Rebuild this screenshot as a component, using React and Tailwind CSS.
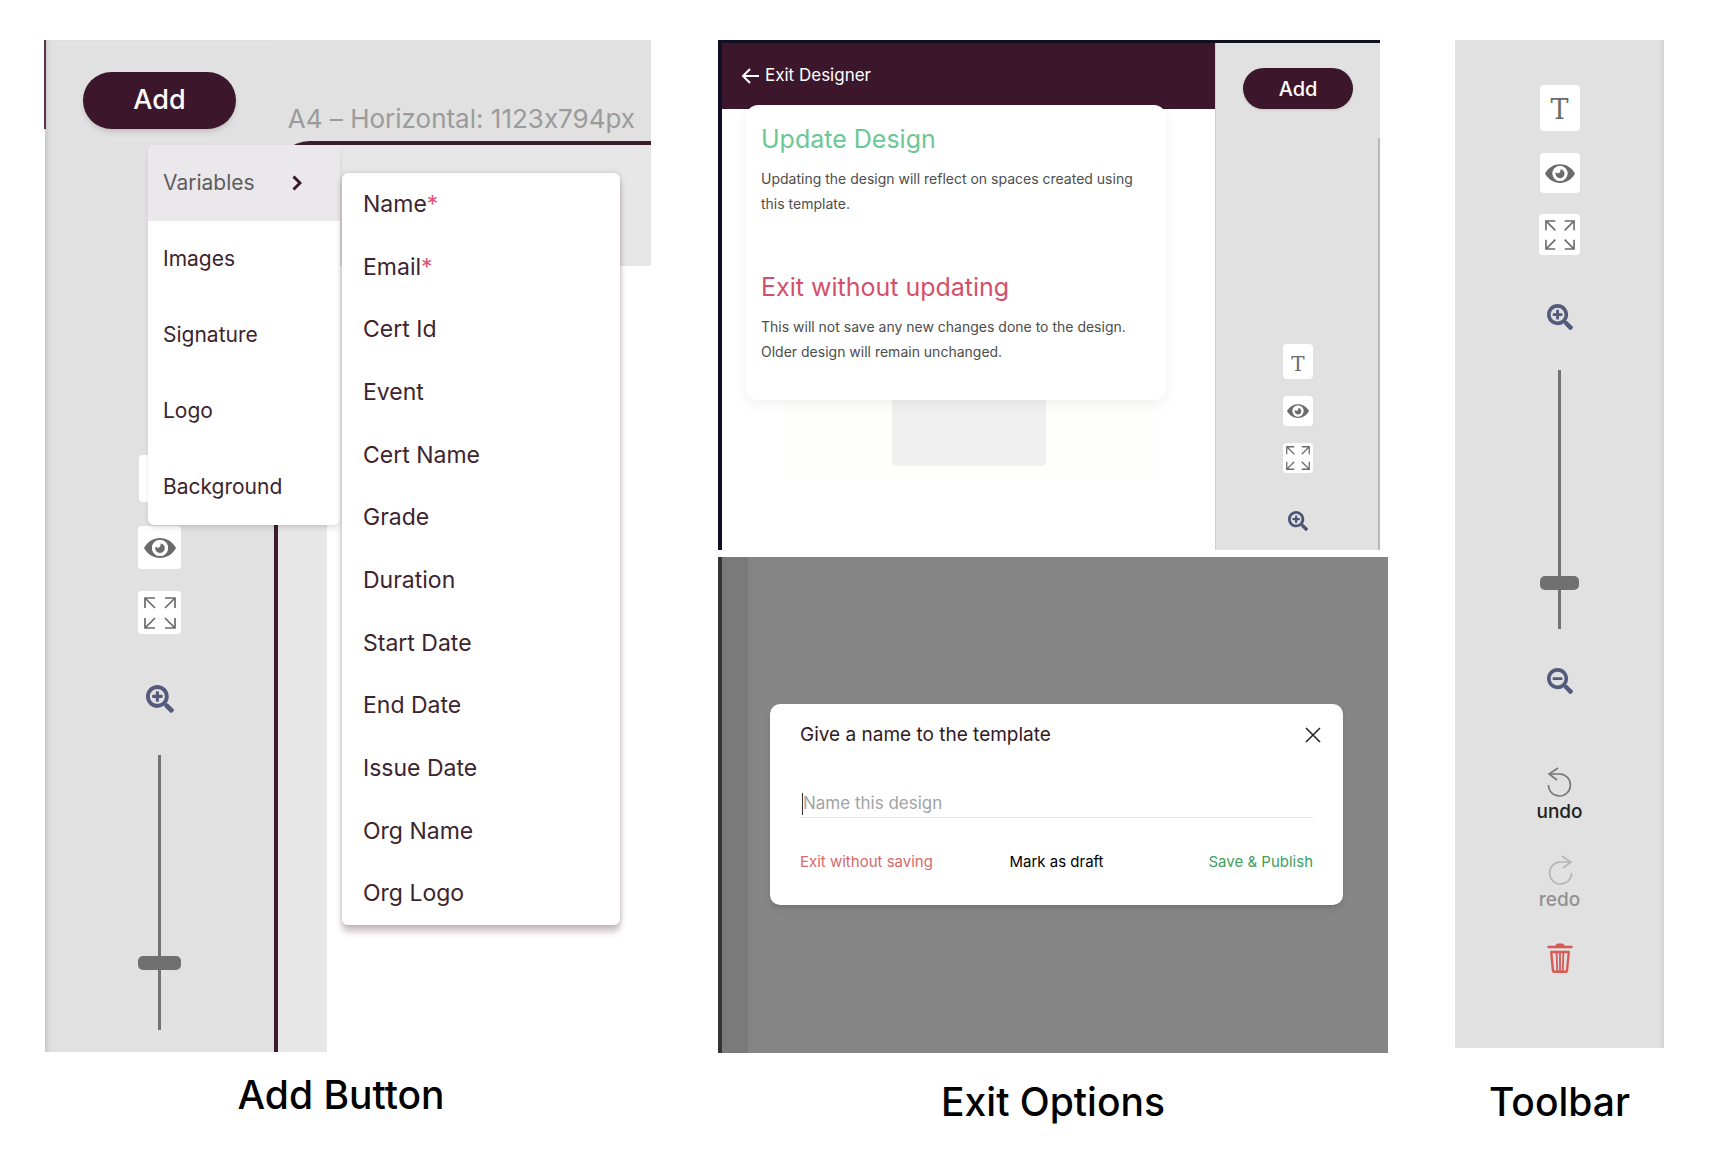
import React from 'react';
import { FaSearchMinus, FaSearchPlus } from 'react-icons/fa';

const MENU_ITEMS = ['Images', 'Signature', 'Logo', 'Background'];

const VARIABLES = [
  { label: 'Name', required: true },
  { label: 'Email', required: true },
  { label: 'Cert Id' },
  { label: 'Event' },
  { label: 'Cert Name' },
  { label: 'Grade' },
  { label: 'Duration' },
  { label: 'Start Date' },
  { label: 'End Date' },
  { label: 'Issue Date' },
  { label: 'Org Name' },
  { label: 'Org Logo' },
];

const EyeIcon = ({ className }) => (
  <svg viewBox="0 0 32 20" fill="currentColor" className={className}>
    <path d="M0 10C3.500 3.500 9.500 0 16 0s12.500 3.500 16 10c-3.500 6.500-9.500 10-16 10S3.500 16.500 0 10z" />
    <circle cx="16" cy="10" r="8" fill="#fff" />
    <circle cx="16" cy="10" r="6.800" fill="none" stroke="#fff" strokeWidth="2.400" />
    <path d="M16.500 5.400a4.800 4.800 0 1 1-5 3.200q1.300 1.600 3.300.9 2.300-1.100 1.700-4.100z" />
  </svg>
);

const ExpandIcon = ({ className }) => (
  <svg viewBox="0 0 32 32" fill="none" stroke="currentColor" strokeWidth="1.700" className={className}>
    <path d="M1 11V1h10M1 1l10 10" />
    <path d="M21 1h10v10M31 1L21 11" />
    <path d="M1 21v10h10M1 31l10-10" />
    <path d="M31 21v10H21M31 31L21 21" />
  </svg>
);

const UndoIcon = ({ className }) => (
  <svg viewBox="0 0 26 30" fill="none" stroke="currentColor" strokeWidth="1.600" className={className}>
    <path d="M11 1L2 7l8 6" />
    <path d="M2 7h11a11 11 0 1 1-11.600 11" />
  </svg>
);

const TrashIcon = ({ className }) => (
  <svg viewBox="0 0 26 30" fill="none" stroke="currentColor" className={className}>
    <path d="M1.500 4h23" strokeWidth="2.400" strokeLinecap="round" />
    <path d="M8 4Q8.500.4 11 .4h4Q17.500.4 18 4z" fill="currentColor" stroke="none" />
    <path d="M4.200 9h17.600L20 27.600q-.1 1.200-1.200 1.200H7.200Q6.100 28.800 6 27.600z" strokeWidth="2.400" strokeLinejoin="round" />
    <path d="M9.600 9l.6 19M16.400 9l-.6 19M13 9v19" strokeWidth="1.800" />
  </svg>
);

const ToolButton = ({ label, className, children }) => (
  <button
    aria-label={label}
    className={`flex items-center justify-center rounded-sm bg-white text-[#6b6b6b] ${className}`}
  >
    {children}
  </button>
);

const ZoomSlider = ({ className, value }) => (
  <input
    type="range"
    aria-label="Zoom"
    defaultValue={value}
    className={`
      appearance-none [writing-mode:vertical-lr] [direction:rtl]
      bg-[linear-gradient(#737373,#737373)] bg-no-repeat bg-center bg-[length:3px_100%]
      [&::-webkit-slider-thumb]:appearance-none [&::-webkit-slider-thumb]:h-[14px]
      [&::-webkit-slider-thumb]:rounded-[5px] [&::-webkit-slider-thumb]:bg-[#707070]
      ${className}
    `}
  />
);

const Caption = ({ className, children }) => (
  <figcaption className={`text-center text-[39px] leading-[48px] font-medium text-black whitespace-nowrap ${className}`}>
    {children}
  </figcaption>
);

const AddMenu = () => (
  <div className="absolute left-[103px] top-[105px] w-[192px]">
    <div className="rounded-[6px] bg-white shadow-md overflow-hidden text-[21px] text-[#3c2430]">
      <button className="flex h-[76px] w-full items-center bg-[#eae8ea] pl-[15px] text-[#5f5d5f]">
        <span className="w-[129px] text-left">Variables</span>
        <svg viewBox="0 0 10 16" fill="none" stroke="#3c172b" strokeWidth="3" className="h-4 w-[10px]">
          <path d="M1.500 1.500L8 8l-6.500 6.500" />
        </svg>
      </button>
      {MENU_ITEMS.map((item) => (
        <button key={item} className="block h-[76px] w-full pl-[15px] text-left">
          {item}
        </button>
      ))}
    </div>

    <div className="absolute left-full top-[28px] ml-[2px] grid h-[752px] w-[278px] grid-rows-12 rounded-[6px] bg-white text-[23px] text-[#3c2430] shadow-[0_7px_6px_rgba(60,23,43,0.25),0_0_5px_rgba(0,0,0,0.16)]">
      {VARIABLES.map(({ label, required }) => (
        <button key={label} className="pl-[21px] text-left">
          {label}
          {required && <span className="text-[#e0527c]">*</span>}
        </button>
      ))}
    </div>
  </div>
);

const AddButtonPanel = () => (
  <figure className="min-w-0">
    <div className="relative flex bg-[#e1e1e1]">
      <span className="absolute left-[-1px] top-0 h-[89px] w-[2px] bg-[#5a3446]" />
      <div className="flex w-[229px] shrink-0 flex-col items-center pt-8 pb-[22px] shadow-[inset_5px_0_5px_-3px_rgba(0,0,0,0.14)]">
        <button className="h-[57px] w-[153px] rounded-full bg-[#3c172b] text-[27px] font-medium text-white shadow-md">
          Add
        </button>
        <ToolButton label="Text" className="mt-[326px] h-[47px] w-[41px]" />
        <ToolButton label="Preview" className="mt-6 h-[43px] w-[43px]">
          <EyeIcon className="h-5 w-8" />
        </ToolButton>
        <ToolButton label="Fit to screen" className="mt-[22px] h-[43px] w-[43px]">
          <ExpandIcon className="h-8 w-8" />
        </ToolButton>
        <button aria-label="Zoom in" className="mt-[51px] text-[#535a7c]">
          <FaSearchPlus className="h-7 w-7" />
        </button>
        <ZoomSlider value={23} className="mt-[42px] h-[275px] w-[43px] [&::-webkit-slider-thumb]:w-[43px]" />
      </div>

      <div className="flex min-w-0 flex-1 flex-col">
        <div className="flex h-[101px] items-end justify-end pr-4 pb-[5px] text-[26px] leading-[34px] whitespace-nowrap text-[#9b9b9b] [font-feature-settings:'calt'_0]">
          A4 – Horizontal: 1123x794px
        </div>
        <div className="flex flex-1 flex-col rounded-tl-[36px] border-t-4 border-l-4 border-[#3c1c2c] bg-white bg-clip-padding">
          <div className="h-[121px] rounded-tl-[32px] bg-[#e7e7e7]" />
          <div className="w-[49px] flex-1 bg-[#e7e7e7]" />
        </div>
      </div>
      <AddMenu />
    </div>
    <Caption className="mt-[19px] pr-[14px]">Add Button</Caption>
  </figure>
);

const ExitOption = ({ title, color, children }) => (
  <section>
    <h2 className={`text-[25px] leading-8 ${color}`}>{title}</h2>
    <p className="mt-[11px] text-[14px] leading-[25px] text-[#4d4d4d]">{children}</p>
  </section>
);

const DesignerPreview = () => (
  <div className="mr-[8px] flex h-[510px] border-t-[3px] border-l-4 border-[#101024]">
    <div className="relative min-w-0 flex-1 bg-white">
      <header className="flex h-[66px] bg-[#3c172b] pl-[19px] pt-[21px]">
        <button className="flex h-6 items-center gap-[6px] text-[17px] text-white">
          <svg viewBox="0 0 18 16" fill="none" stroke="currentColor" strokeWidth="2" className="h-4 w-[18px]">
            <path d="M9 1L2 8l7 7M2 8h16" />
          </svg>
          Exit Designer
        </button>
      </header>
      <div className="mx-[60px] flex h-[371px] items-end justify-center bg-[#fefefd] pb-[14px]">
        <div className="h-[90px] w-[154px] rounded-sm bg-[#f0f0f0]" />
      </div>
      <div className="absolute left-6 right-[49px] top-[62px] flex h-[295px] flex-col gap-[55px] rounded-[12px] bg-white pl-[15px] pr-1 pt-[18px] shadow-[0_4px_14px_rgba(0,0,0,0.06)]">
        <ExitOption title="Update Design" color="text-[#6bc795]">
          Updating the design will reflect on spaces created using
          <br />
          this template.
        </ExitOption>
        <ExitOption title="Exit without updating" color="text-[#d4506a]">
          This will not save any new changes done to the design.
          <br />
          Older design will remain unchanged.
        </ExitOption>
      </div>
    </div>

    <div className="relative flex w-[165px] shrink-0 flex-col items-center border-l border-[#cfcfcf] bg-[#e1e1e1] pt-[25px]">
      <span className="absolute right-0 top-[95px] bottom-0 w-[2px] bg-[#b8b8b8]" />
      <button className="h-[41px] w-[110px] rounded-full bg-[#3c172b] text-[20px] font-medium text-white shadow-sm">
        Add
      </button>
      <ToolButton label="Text" className="mt-[235px] h-[35px] w-[30px] pt-1">
        <span className="font-['DejaVu_Serif',serif] text-[20px]">T</span>
      </ToolButton>
      <ToolButton label="Preview" className="mt-[17px] h-[30px] w-[30px]">
        <EyeIcon className="h-[14px] w-[22px]" />
      </ToolButton>
      <ToolButton label="Fit to screen" className="mt-[17px] h-[30px] w-[30px]">
        <ExpandIcon className="h-6 w-6" />
      </ToolButton>
      <button aria-label="Zoom in" className="mt-[38px] text-[#4d5475]">
        <FaSearchPlus className="h-5 w-5" />
      </button>
    </div>
  </div>
);

const NameDialog = () => (
  <div className="mt-[7px] flex h-[496px] bg-[#858585]">
    <div className="w-[30px] shrink-0 border-l-4 border-[#343434] bg-[#7a7a7a]" />
    <div className="min-w-0 flex-1 pl-[22px] pr-[45px] pt-[147px]">
      <div role="dialog" aria-label="Template name" className="rounded-[10px] bg-white px-[30px] pt-[17px] pb-[31px] shadow-md">
        <div className="flex h-7 items-center justify-between">
          <h2 className="text-[19px] text-[#2f1a25]">Give a name to the template</h2>
          <button aria-label="Close" className="mr-[-8px] text-[#222]">
            <svg viewBox="0 0 16 16" fill="none" stroke="currentColor" strokeWidth="1.500" className="h-4 w-4">
              <path d="M1 1l14 14M15 1L1 15" />
            </svg>
          </button>
        </div>
        <div className="mt-[42px] flex h-[27px] items-center border-b border-[#e6e6e6] pl-[2px]">
          <span className="h-[22px] w-px bg-[#333]" />
          <input
            aria-label="Design name"
            placeholder="Name this design"
            className="min-w-0 flex-1 text-[17px] outline-none placeholder:text-[#a3a3a3]"
          />
        </div>
        <div className="mt-8 grid grid-cols-3 text-[15px] leading-6">
          <button className="text-left text-[#d46a6a]">Exit without saving</button>
          <button className="text-black">Mark as draft</button>
          <button className="text-right text-[#3f9f5c]">Save &amp; Publish</button>
        </div>
      </div>
    </div>
  </div>
);

const ExitOptionsPanel = () => (
  <figure className="min-w-0">
    <DesignerPreview />
    <NameDialog />
    <Caption className="mt-[25px]">Exit Options</Caption>
  </figure>
);

const ToolbarPanel = () => (
  <figure className="min-w-0">
    <div className="flex h-[1008px] flex-col items-center bg-[#e1e1e1] pt-[45px] shadow-[inset_-5px_0_5px_-3px_rgba(0,0,0,0.07)]">
      <ToolButton label="Text" className="h-[46px] w-10 pt-[5px]">
        <span className="font-['DejaVu_Serif',serif] text-[27px]">T</span>
      </ToolButton>
      <ToolButton label="Preview" className="mt-[22px] h-10 w-10">
        <EyeIcon className="h-[19px] w-[30px]" />
      </ToolButton>
      <ToolButton label="Fit to screen" className="mt-[21px] h-[41px] w-[41px]">
        <ExpandIcon className="h-[30px] w-[30px]" />
      </ToolButton>
      <button aria-label="Zoom in" className="mt-[49px] text-[#535a7c]">
        <FaSearchPlus className="h-[26px] w-[26px]" />
      </button>
      <ZoomSlider value={16} className="mt-10 h-[259px] w-[39px] [&::-webkit-slider-thumb]:w-[39px]" />
      <button aria-label="Zoom out" className="mt-[39px] text-[#535a7c]">
        <FaSearchMinus className="h-[26px] w-[26px]" />
      </button>
      <button className="mt-[73px] flex flex-col items-center text-[19px] leading-[30px] font-medium text-[#222]">
        <UndoIcon className="h-[30px] w-[26px] text-[#777]" />
        undo
      </button>
      <button className="mt-[28px] flex flex-col items-center text-[19px] leading-[30px] font-medium text-[#919191]">
        <UndoIcon className="h-[30px] w-[26px] -scale-x-100 text-[#b5b5b5]" />
        redo
      </button>
      <button aria-label="Delete" className="mt-[28px] text-[#d65a56]">
        <TrashIcon className="h-[30px] w-[26px]" />
      </button>
    </div>
    <Caption className="mt-[30px]">Toolbar</Caption>
  </figure>
);

const App = () => {
  return (
    <main className="grid grid-cols-[606fr_670fr_209fr] gap-x-[67px] bg-white pt-10 pb-5 pl-[45px] pr-14 font-['Inter',sans-serif]">
      <AddButtonPanel />
      <ExitOptionsPanel />
      <ToolbarPanel />
    </main>
  );
};

export default App;
